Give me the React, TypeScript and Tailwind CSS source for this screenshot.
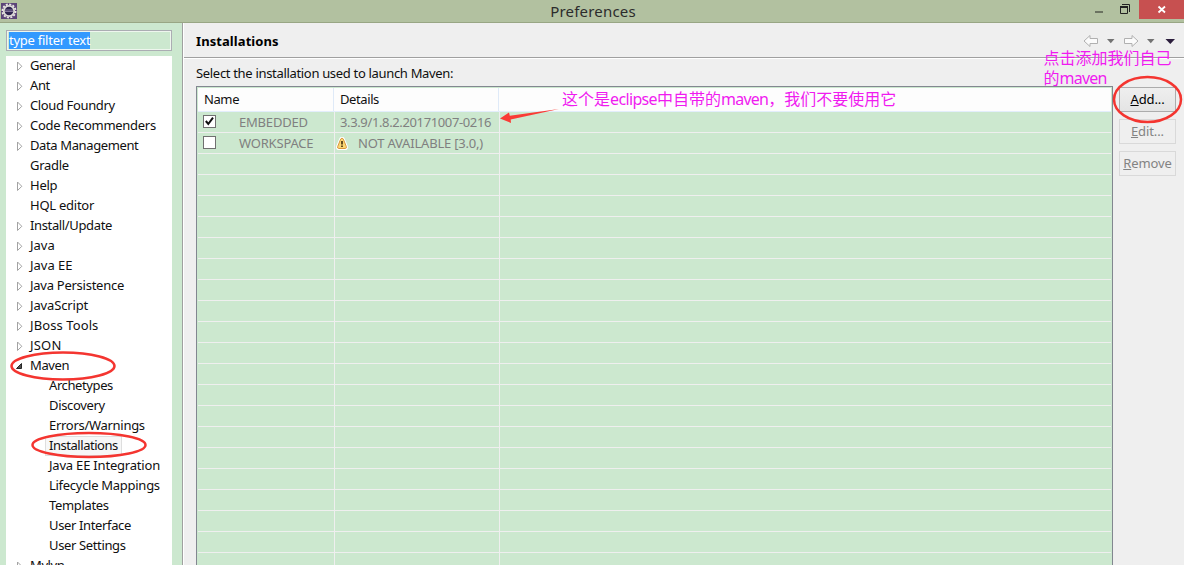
import React from "react";

type Item = { label: string; track: string; state?: "closed" | "open"; child?: boolean; selected?: boolean };

const items: Item[] = [
  { label: "General", track: "tracking-[-0.4px]", state: "closed" },
  { label: "Ant", track: "tracking-[-0.4px]", state: "closed" },
  { label: "Cloud Foundry", track: "tracking-[-0.37px]", state: "closed" },
  { label: "Code Recommenders", track: "tracking-[-0.3px]", state: "closed" },
  { label: "Data Management", track: "tracking-[-0.38px]", state: "closed" },
  { label: "Gradle", track: "tracking-[-0.3px]" },
  { label: "Help", track: "tracking-[-0.25px]", state: "closed" },
  { label: "HQL editor", track: "tracking-[-0.25px]" },
  { label: "Install/Update", track: "tracking-[-0.36px]", state: "closed" },
  { label: "Java", track: "tracking-normal", state: "closed" },
  { label: "Java EE", track: "tracking-normal", state: "closed" },
  { label: "Java Persistence", track: "tracking-[-0.26px]", state: "closed" },
  { label: "JavaScript", track: "tracking-[-0.15px]", state: "closed" },
  { label: "JBoss Tools", track: "tracking-[0.1px]", state: "closed" },
  { label: "JSON", track: "tracking-[0.2px]", state: "closed" },
  { label: "Maven", track: "tracking-[-0.4px]", state: "open" },
  { label: "Archetypes", track: "tracking-[-0.4px]", child: true },
  { label: "Discovery", track: "tracking-[-0.35px]", child: true },
  { label: "Errors/Warnings", track: "tracking-[-0.29px]", child: true },
  { label: "Installations", track: "tracking-[-0.46px]", child: true, selected: true },
  { label: "Java EE Integration", track: "tracking-[-0.2px]", child: true },
  { label: "Lifecycle Mappings", track: "tracking-[-0.28px]", child: true },
  { label: "Templates", track: "tracking-[-0.33px]", child: true },
  { label: "User Interface", track: "tracking-[-0.36px]", child: true },
  { label: "User Settings", track: "tracking-[-0.36px]", child: true },
  { label: "Mylyn", track: "tracking-[-0.4px]", state: "closed" },
];

function EclipseIcon() {
  return (
    <svg className="ml-px mt-[3px] h-4 w-4 shrink-0" viewBox="0 0 16 16">
      <rect width="16" height="16" fill="#5c4478" />
      <circle cx="8" cy="8" r="6.600" fill="none" stroke="#e9e7e4" strokeWidth="1.800" strokeDasharray="2.100 1.350" />
      <circle cx="8" cy="8" r="5.200" fill="#2f2550" stroke="#dedbd8" strokeWidth="1.800" />
      <path d="M4 7h8M4 8.500h8" stroke="#84779c" strokeWidth="1" />
    </svg>
  );
}

function Expander({ open }: { open?: boolean }) {
  return (
    <svg className="h-5 w-[9px]" viewBox="0 0 9 20">
      {open ? (
        <path d="M5.500 7.500v5h-5z" fill="#505050" stroke="#262626" />
      ) : (
        <path d="M1.500 6v8.500l4.300-4.200z" fill="#fff" stroke="#a3a3a3" />
      )}
    </svg>
  );
}

function Sidebar() {
  return (
    <aside className="flex w-[182px] shrink-0 flex-col bg-[#cce8cf] pl-[6px] pt-[7px]">
      <div className="h-[21px] w-[166px] shrink-0 border border-[#abadb3]">
        <div className="h-full border border-[#eef6ee] pl-px">
          <span className="block h-[17px] w-[81px] whitespace-nowrap bg-[#3399ff] text-[13px] leading-[16px] tracking-[-0.25px] text-white">
            type filter text
          </span>
        </div>
      </div>
      <ul className="mt-[5px] w-[166px] grow overflow-hidden bg-white text-[13px] leading-[18px] text-[#101010]">
        {items.map((it) => (
          <li key={it.label} className="flex h-5 whitespace-nowrap">
            <span className={it.child ? "w-[39px] shrink-0" : "w-[20px] shrink-0 pl-[10px]"}>
              {it.state && <Expander open={it.state === "open"} />}
            </span>
            <span
              className={
                it.track +
                (it.selected ? " border border-[#dedede] bg-[#f7f7f7] px-[3px] leading-[16px]" : " pl-1")
              }
            >
              {it.label}
            </span>
          </li>
        ))}
      </ul>
    </aside>
  );
}

function Check({ on }: { on?: boolean }) {
  return (
    <svg className="mb-[2px] h-[13px] w-[13px] shrink-0" viewBox="0 0 13 13">
      <rect x=".5" y=".5" width="12" height="12" fill="#fff" stroke="#707070" />
      {on && <path d="M2.800 6l2.500 3 4.700-6.300" fill="none" stroke="#101010" strokeWidth="2" />}
    </svg>
  );
}

function Warn() {
  return (
    <svg className="h-[13px] w-[13px] shrink-0" viewBox="0 0 13 13">
      <path d="M6 1.200Q7.100 1.200 7.700 3L10.300 9.500Q10.800 11.500 9.300 11.500H2.700Q1.200 11.500 1.700 9.500L4.300 3Q4.900 1.200 6 1.200z" fill="#fbd774" stroke="#fff" strokeWidth="3" />
      <path d="M6 1.200Q7.100 1.200 7.700 3L10.300 9.500Q10.800 11.500 9.300 11.500H2.700Q1.200 11.500 1.700 9.500L4.300 3Q4.900 1.200 6 1.200z" fill="#fbd774" stroke="#d9963c" />
      <path d="M6 4v3.600M6 8.600v1.400" stroke="#3f2a0c" strokeWidth="1.600" />
    </svg>
  );
}

function Table() {
  return (
    <div className="flex w-[917px] shrink-0 flex-col overflow-hidden border border-b-0 border-[#828790] bg-[#cce8cf] px-px pt-px text-[13px]">
      <div className="flex h-[24px] shrink-0 border-b border-[#e3eefc] bg-[#fdfdfd] leading-[22px] text-[#101010]">
        <div className="w-[136px] border-r border-[#dfeaf8] pl-[6px] tracking-[-0.4px]">Name</div>
        <div className="w-[165px] border-r border-[#dfeaf8] pl-[6px] tracking-[-0.4px]">Details</div>
      </div>
      {Array.from({ length: 22 }, (_, i) => (
        <div key={i} className="flex h-[21px] shrink-0 border-b border-[#efefef] leading-[20px] text-[#808080]">
          <div className="flex w-[137px] items-center border-r border-[#efefef] pl-[5px]">
            {i < 2 && (
              <>
                <Check on={i === 0} />
                <span className="ml-[23px] tracking-[-0.2px]">{i === 0 ? "EMBEDDED" : "WORKSPACE"}</span>
              </>
            )}
          </div>
          <div className="flex w-[165px] items-center whitespace-nowrap border-r border-[#efefef]">
            {i === 0 && <span className="pl-[5px] tracking-[-0.37px]">3.3.9/1.8.2.20171007-0216</span>}
            {i === 1 && (
              <>
                <span className="ml-px">
                  <Warn />
                </span>
                <span className="ml-[9px] tracking-[-0.2px]">NOT AVAILABLE [3.0,)</span>
              </>
            )}
          </div>
        </div>
      ))}
    </div>
  );
}

function NavArrows() {
  return (
    <svg className="h-4 w-[94px]" viewBox="0 0 94 16">
      <g fill="#fbfbfb" stroke="#b0b0b0" strokeLinejoin="round">
        <path d="M1 8l6-5.500v3h7.500v5H7v3z" />
        <path d="M55 8l-6-5.500v3h-7.500v5H49v3z" />
      </g>
      <path d="M24 6h7.500l-3.700 4.200z" fill="#737373" />
      <path d="M64 6h7.500l-3.700 4.200z" fill="#737373" />
      <path d="M82.500 6h9.500l-4.700 5z" fill="#2b1d3c" />
    </svg>
  );
}

const buttonBase = "h-[25px] w-[57px] whitespace-nowrap border text-center text-[13px] leading-[21px] tracking-[-0.1px]";

export default function App() {
  return (
    <div className="relative flex h-[565px] w-[1184px] flex-col overflow-hidden bg-[#efefef] font-['Noto_Sans','Noto_Sans_CJK_SC',sans-serif]">
      <header className="flex h-[23px] shrink-0 border-b border-[#98a684] bg-[#b2c1a0]">
        <EclipseIcon />
        <h1 className="grow pl-[75px] text-center text-[15px] leading-[22px] tracking-[0.2px] text-[#2c2c2c]">
          Preferences
        </h1>
        <svg className="h-[22px] w-[45px] shrink-0" viewBox="0 0 45 22">
          <path d="M1 12h8" stroke="#6b7361" strokeWidth="2" />
          <path d="M28 4.500h7.500v7.500" fill="none" stroke="#222" />
          <path d="M26.500 6.500h7v7h-7z" fill="none" stroke="#222" />
          <path d="M26 7h8" stroke="#222" strokeWidth="2" />
        </svg>
        <svg className="h-[19px] w-[45px] shrink-0 bg-[#c75050]" viewBox="0 0 45 19">
          <path d="M19.500 6.500l6.500 6m0-6l-6.500 6" stroke="#fff" strokeWidth="1.800" />
        </svg>
      </header>
      <div className="flex min-h-0 grow">
        <Sidebar />
        <div className="w-[2px] shrink-0 border-l border-[#a0a0a0] bg-white" />
        <main className="flex min-w-0 grow flex-col">
          <div className="flex h-[35px] shrink-0 justify-between border-b border-[#a0a0a0] pl-[12px] pr-[7px] pt-[10px]">
            <h2 className="text-[13px] font-bold leading-[17px] tracking-[0.08px] text-black">Installations</h2>
            <NavArrows />
          </div>
          <p className="h-[28px] shrink-0 border-t border-white pl-[12px] text-[13px] leading-[28px] tracking-[-0.32px] text-[#101010]">
            Select the installation used to launch Maven:
          </p>
          <div className="flex min-h-0 grow pl-[12px]">
            <Table />
            <div className="ml-[6px] flex flex-col gap-[7px] pt-px">
              <button className={buttonBase + " border-[#acacac] bg-gradient-to-b from-[#efefef] to-[#e4e4e4] text-black"}>
                <u>A</u>dd...
              </button>
              <button className={buttonBase + " border-[#d9d9d9] bg-[#efefef] text-[#838383]"}>
                <u>E</u>dit...
              </button>
              <button className={buttonBase + " border-[#d9d9d9] bg-[#efefef] text-[#838383]"}>
                <u>R</u>emove
              </button>
            </div>
          </div>
        </main>
      </div>
      <div className="absolute left-[562px] top-[89px] whitespace-nowrap text-[16px] leading-[20px] text-[#f01bf0]">
        这个是<span className="tracking-[-0.65px]">eclipse</span>中自带的<span className="tracking-[-0.75px]">maven</span>，我们不要使用它
      </div>
      <div className="absolute left-[1043.5px] top-[48px] whitespace-nowrap text-[16px] leading-[20px] text-[#f01bf0]">
        点击添加我们自己
        <br />
        的<span className="tracking-[-0.75px]">maven</span>
      </div>
      <svg className="pointer-events-none absolute left-0 top-0 h-[565px] w-[1184px]" viewBox="0 0 1184 565">
        <g fill="none" stroke="#f43530" strokeWidth="2.500">
          <ellipse cx="63" cy="366" rx="51.500" ry="13.500" />
          <ellipse cx="89" cy="445" rx="56.500" ry="12" />
          <ellipse cx="1147.500" cy="99.500" rx="33.500" ry="22.500" />
        </g>
        <path d="M500 118.500l9-6 .8 3.200L559 109l-48.300 10.500 .3 3.500z" fill="#fa3b36" />
      </svg>
    </div>
  );
}
